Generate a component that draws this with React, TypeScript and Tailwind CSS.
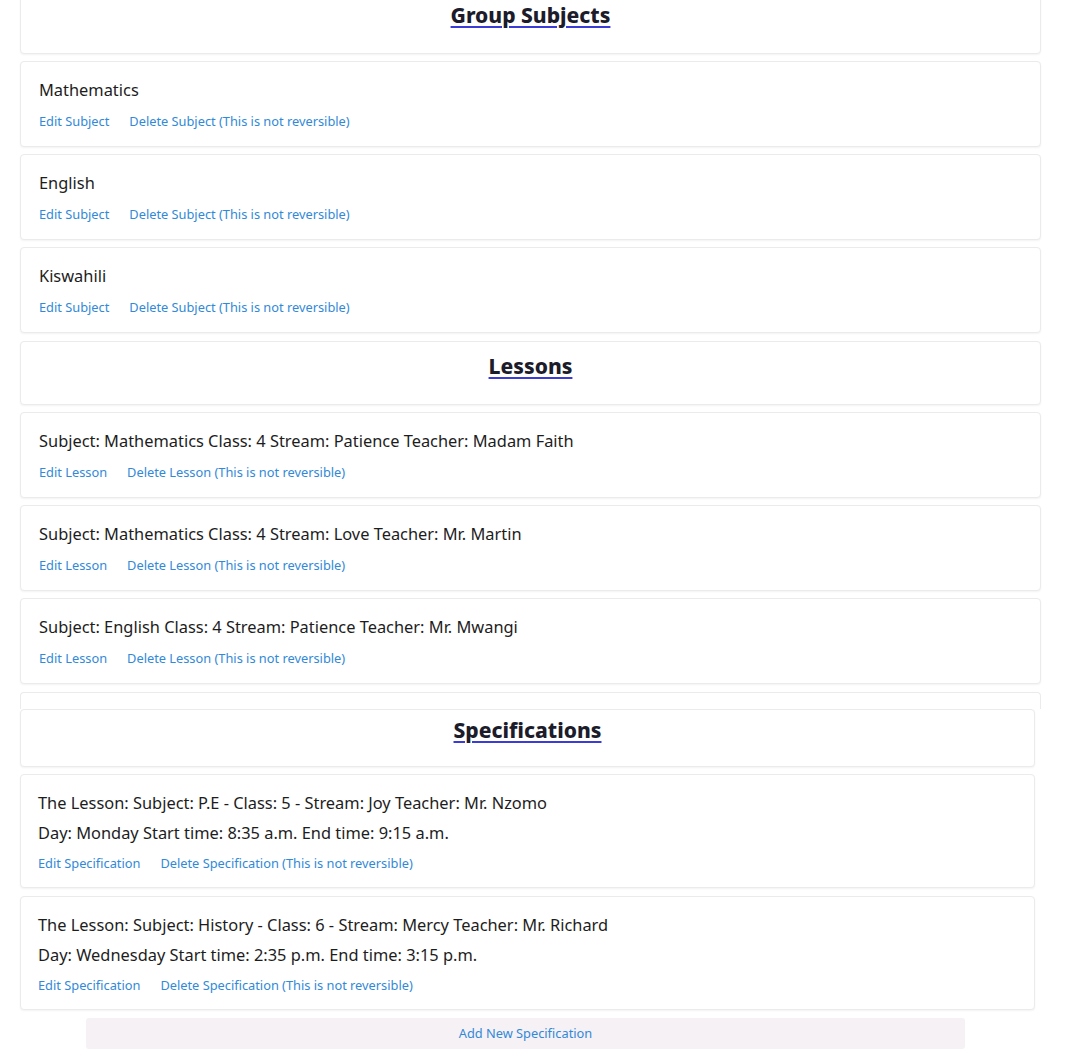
import React from "react";

const font = { fontFamily: '"Noto Sans", "Open Sans", sans-serif' };

function Heading({ children }: { children: React.ReactNode }) {
  return (
    <h2 className="text-center text-[21px] font-extrabold leading-[28px] text-[#1c1c2b] underline decoration-[#3b3bd6] decoration-2 underline-offset-[3px]">
      {children}
    </h2>
  );
}

function LinkRow({ a, b }: { a: string; b: string }) {
  return (
    <div className="flex gap-[20px] text-[12.8px] leading-[20px] text-[#3189d8]">
      <a>{a}</a>
      <a>{b}</a>
    </div>
  );
}

function SimpleCard({ title, kind }: { title: string; kind: string }) {
  return (
    <div className="rounded-[4px] border border-[#ebebeb] bg-white px-[18px] pt-[18px] pb-[15px] shadow-[0_1px_2px_rgba(0,0,0,0.05)]">
      <div className="text-[16.4px] leading-[20px] text-[#1d1d1d]">{title}</div>
      <div className="mt-[11px]">
        <LinkRow a={`Edit ${kind}`} b={`Delete ${kind} (This is not reversible)`} />
      </div>
    </div>
  );
}

function SpecCard({ l1, l2 }: { l1: string; l2: string }) {
  return (
    <div className="rounded-[4px] border border-[#ebebeb] bg-white px-[17px] pt-[18px] pb-[14px] shadow-[0_1px_2px_rgba(0,0,0,0.05)]">
      <div className="text-[16.4px] leading-[20px] text-[#1d1d1d]">{l1}</div>
      <div className="mt-[10px] text-[16.4px] leading-[20px] text-[#1d1d1d]">{l2}</div>
      <div className="mt-[10px]">
        <LinkRow a="Edit Specification" b="Delete Specification (This is not reversible)" />
      </div>
    </div>
  );
}

export default function App() {
  return (
    <div className="min-h-[1058px] overflow-hidden bg-white" style={font}>
      <div className="ml-[20px] w-[1021px]">
        <div className="-mt-[10px] flex flex-col gap-[7px]">
          <div className="h-[64px] rounded-[4px] border border-[#ebebeb] bg-white pt-[10px] shadow-[0_1px_2px_rgba(0,0,0,0.05)]">
            <Heading>Group Subjects</Heading>
          </div>
          <SimpleCard title="Mathematics" kind="Subject" />
          <SimpleCard title="English" kind="Subject" />
          <SimpleCard title="Kiswahili" kind="Subject" />
          <div className="mt-[1px] h-[64px] rounded-[4px] border border-[#ebebeb] bg-white pt-[10px] shadow-[0_1px_2px_rgba(0,0,0,0.05)]">
            <Heading>Lessons</Heading>
          </div>
          <SimpleCard title="Subject: Mathematics Class: 4 Stream: Patience Teacher: Madam Faith" kind="Lesson" />
          <SimpleCard title="Subject: Mathematics Class: 4 Stream: Love Teacher: Mr. Martin" kind="Lesson" />
          <SimpleCard title="Subject: English Class: 4 Stream: Patience Teacher: Mr. Mwangi" kind="Lesson" />
        </div>
        <div className="mt-[8px] h-[17px] rounded-t-[4px] border-x border-t border-[#ebebeb] bg-white" />
      </div>
      <div className="ml-[20px] w-[1015px] flex flex-col gap-[7px]">
        <div className="h-[58px] rounded-[4px] border border-[#ebebeb] bg-white pt-[6px] shadow-[0_1px_2px_rgba(0,0,0,0.05)]">
          <Heading>Specifications</Heading>
        </div>
        <SpecCard
          l1="The Lesson: Subject: P.E - Class: 5 - Stream: Joy Teacher: Mr. Nzomo"
          l2="Day: Monday Start time: 8:35 a.m. End time: 9:15 a.m."
        />
        <div className="mt-[1px]">
          <SpecCard
            l1="The Lesson: Subject: History - Class: 6 - Stream: Mercy Teacher: Mr. Richard"
            l2="Day: Wednesday Start time: 2:35 p.m. End time: 3:15 p.m."
          />
        </div>
        <div className="mt-[1px] flex justify-center">
          <button className="h-[31px] w-[879px] -translate-x-[2px] rounded-[3px] bg-[#f6f1f5] text-[12.8px] text-[#3189d8]">
            Add New Specification
          </button>
        </div>
      </div>
    </div>
  );
}
